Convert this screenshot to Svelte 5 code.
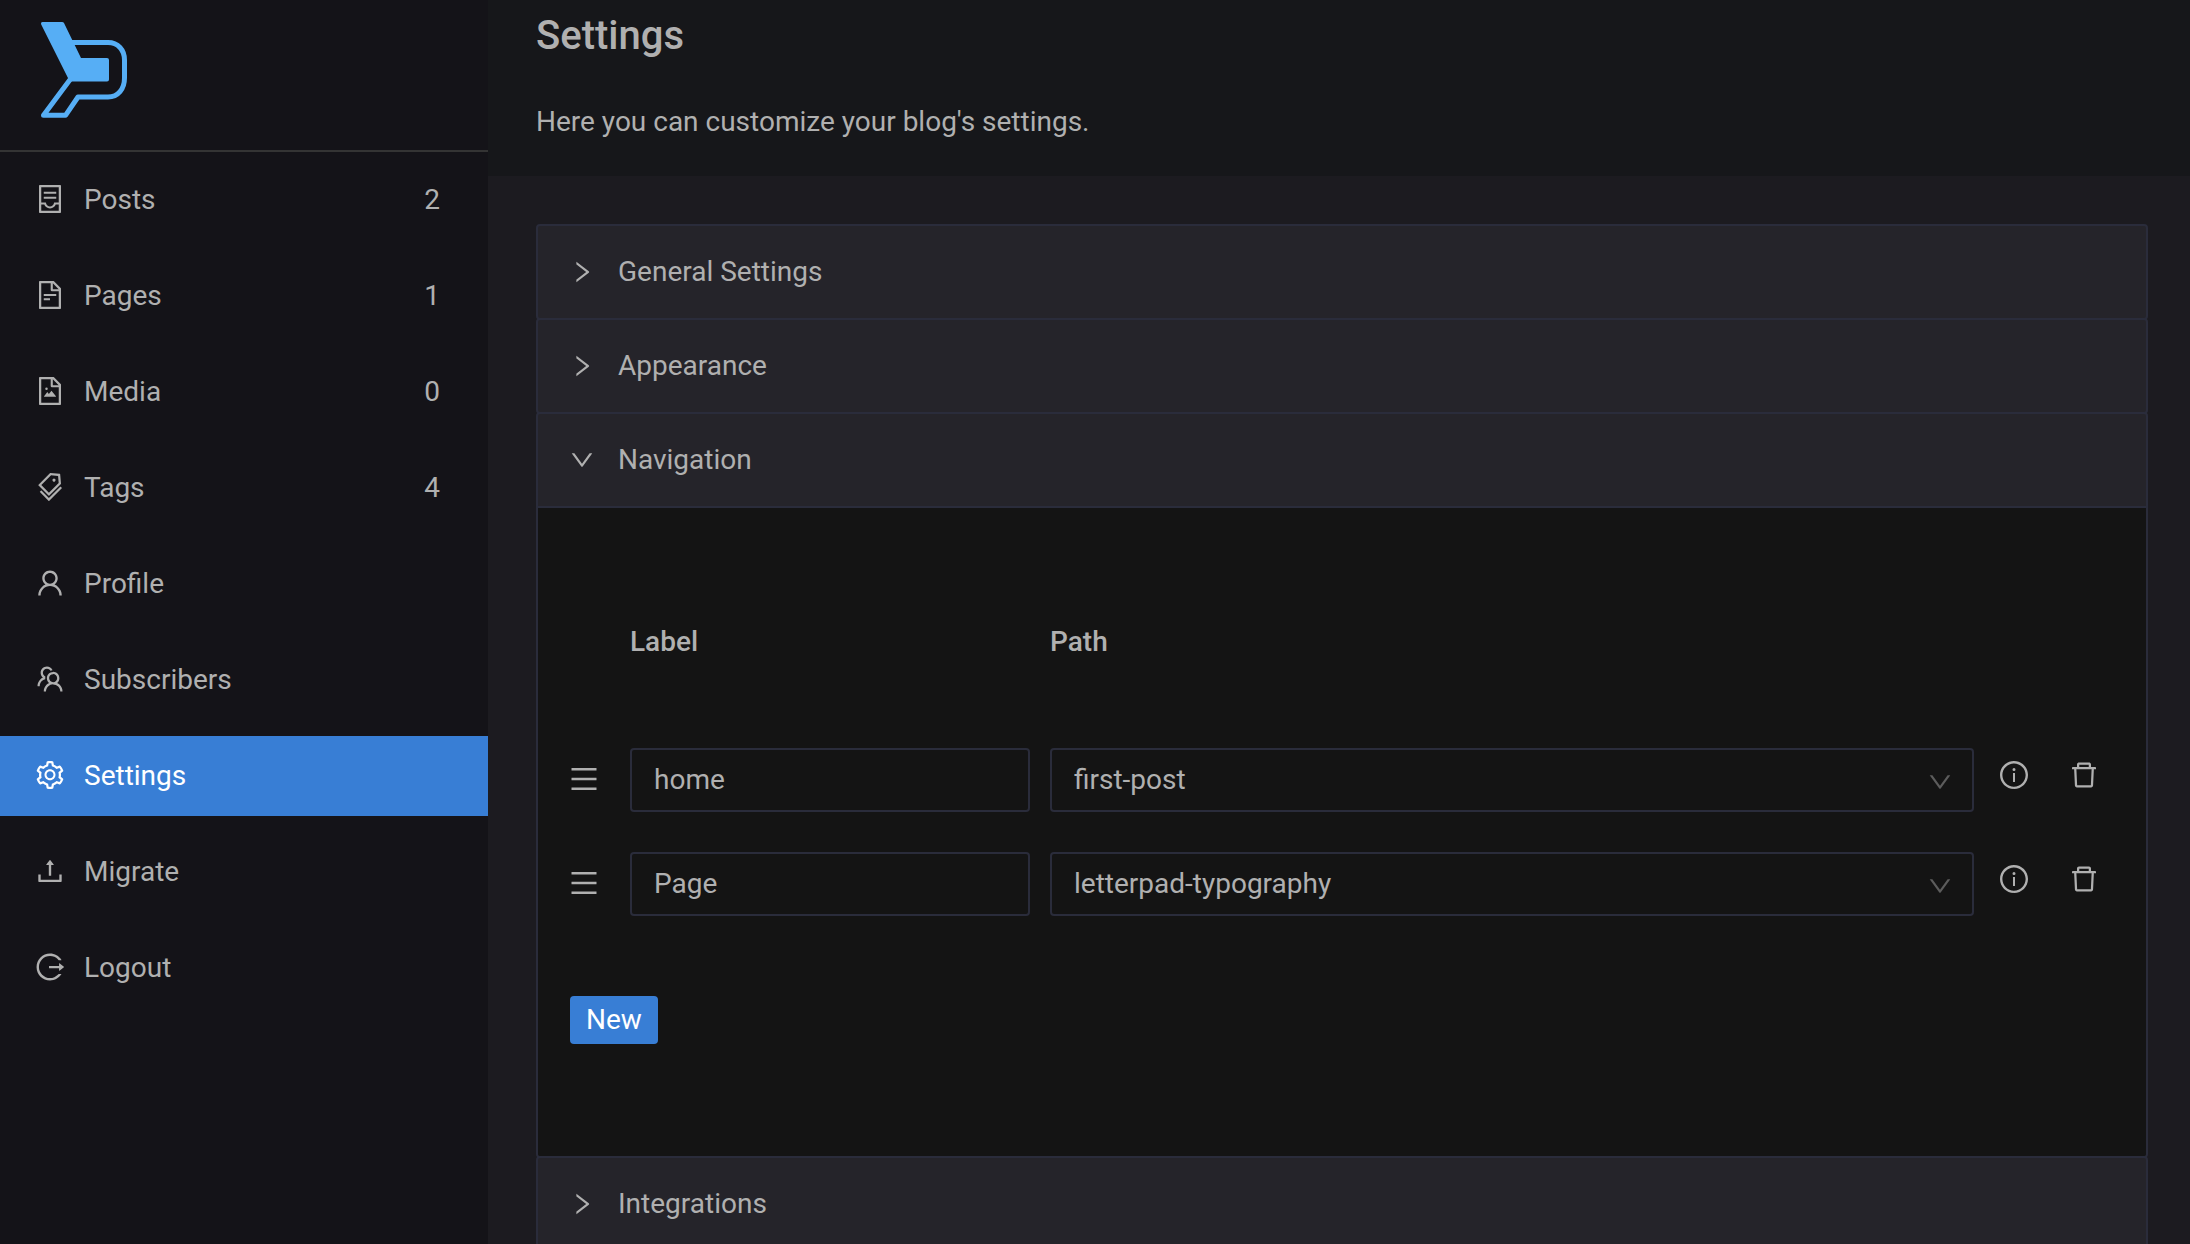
<script>
  const icons = {
    posts: 'M832 64H192c-17.7 0-32 14.3-32 32v832c0 17.7 14.3 32 32 32h640c17.7 0 32-14.3 32-32V96c0-17.7-14.3-32-32-32zm-40 824H232V687h97.9c11.6 32.8 32 62.3 59.1 84.7 34.5 28.5 78.2 44.3 123 44.3s88.5-15.7 123-44.3c27.1-22.4 47.5-51.9 59.1-84.7H792v201zm0-264H643.6l-5.2 24.7C626.4 708.5 573.2 752 512 752s-114.4-43.5-126.5-103.3l-5.2-24.7H232V136h560v488zM320 341h384c4.4 0 8-3.6 8-8v-48c0-4.4-3.6-8-8-8H320c-4.4 0-8 3.6-8 8v48c0 4.4 3.6 8 8 8zm0 160h384c4.4 0 8-3.6 8-8v-48c0-4.4-3.6-8-8-8H320c-4.4 0-8 3.6-8 8v48c0 4.4 3.6 8 8 8z',
    pages: 'M854.6 288.6L639.4 73.4c-6-6-14.1-9.4-22.6-9.4H192c-17.7 0-32 14.3-32 32v832c0 17.7 14.3 32 32 32h640c17.7 0 32-14.3 32-32V311.3c0-8.5-3.4-16.7-9.4-22.7zM790.2 326H602V137.8L790.2 326zm1.8 562H232V136h302v216a42 42 0 0042 42h216v494zM504 618H320c-4.4 0-8 3.6-8 8v48c0 4.4 3.6 8 8 8h184c4.4 0 8-3.6 8-8v-48c0-4.4-3.6-8-8-8zM312 490v48c0 4.4 3.6 8 8 8h384c4.4 0 8-3.6 8-8v-48c0-4.4-3.6-8-8-8H320c-4.4 0-8 3.6-8 8z',
    media: 'M553.1 509.1l-77.8 99.2-41.1-52.4a8 8 0 00-12.6 0l-99.8 127.2a7.98 7.98 0 006.3 12.9H696c6.7 0 10.4-7.7 6.3-12.9l-136.5-174a8.1 8.1 0 00-12.7 0zM360 442a40 40 0 1080 0 40 40 0 10-80 0zm494.6-153.4L639.4 73.4c-6-6-14.1-9.4-22.6-9.4H192c-17.7 0-32 14.3-32 32v832c0 17.7 14.3 32 32 32h640c17.7 0 32-14.3 32-32V311.3c0-8.5-3.4-16.7-9.4-22.7zM790.2 326H602V137.8L790.2 326zm1.8 562H232V136h302v216a42 42 0 0042 42h216v494z',
    tags: 'M483.2 790.3L861.4 412c1.7-1.7 2.5-4 2.3-6.3l-25.5-301.4c-.7-7.8-6.8-13.9-14.6-14.6L522.2 64.3c-2.3-.2-4.7.6-6.3 2.3L137.7 444.8a8.03 8.03 0 000 11.3l334.2 334.2c3.1 3.2 8.2 3.2 11.3 0zm62.6-651.7l224.6 19 19 224.6L477.5 694 233.9 450.5l311.9-311.9zm60.16 186.23a48 48 0 1067.88-67.89 48 48 0 10-67.88 67.89zM889.7 539.8l-39.6-39.5a8.03 8.03 0 00-11.3 0l-362 361.3-237.6-237a8.03 8.03 0 00-11.3 0l-39.6 39.5a8.03 8.03 0 000 11.3l243.2 242.8 39.6 39.5c3.1 3.1 8.2 3.1 11.3 0l407.3-406.6c3.1-3.1 3.1-8.2 0-11.3z',
    profile: 'M858.5 763.6a374 374 0 00-80.6-119.5 375.63 375.63 0 00-119.5-80.6c-.4-.2-.8-.3-1.2-.5C719.5 518 760 444.7 760 362c0-137-111-248-248-248S264 225 264 362c0 82.7 40.5 156 102.8 201.1-.4.2-.8.3-1.2.5-44.8 18.9-85 46-119.5 80.6a375.63 375.63 0 00-80.6 119.5A371.7 371.7 0 00136 901.8a8 8 0 008 8.2h60c4.4 0 7.9-3.5 8-7.8 2-77.2 33-149.5 87.8-204.3 56.7-56.7 132-87.9 212.2-87.9s155.5 31.2 212.2 87.9C779 752.7 810 825 812 902.2c.1 4.4 3.6 7.8 8 7.8h60a8 8 0 008-8.2c-1-47.8-10.9-94.3-29.5-138.2zM512 534c-45.9 0-89.1-17.9-121.6-50.4S340 407.9 340 362c0-45.9 17.9-89.1 50.4-121.6S466.1 190 512 190s89.1 17.9 121.6 50.4S684 316.1 684 362c0 45.9-17.9 89.1-50.4 121.6S557.9 534 512 534z',
    subscribers: 'M824.2 699.9a301.55 301.55 0 00-86.4-60.4C783.1 602.8 812 546.8 812 484c0-110.8-92.4-201.7-203.2-200-109.1 1.7-197 90.6-197 200 0 62.8 29 118.8 74.2 155.5a300.95 300.95 0 00-86.4 60.4C345 754.6 314 826.8 312 903.8a8 8 0 008 8.2h56c4.3 0 7.9-3.4 8-7.7 1.9-58 25.4-112.3 66.7-153.5A226.62 226.62 0 01612 684c60.9 0 118.2 23.7 161.3 66.8C814.6 792 838 846.3 840 904.3c.1 4.3 3.7 7.7 8 7.7h56a8 8 0 008-8.2c-2-77-33-149.2-87.8-203.9zM612 612c-34.2 0-66.4-13.3-90.5-37.5a126.86 126.86 0 01-37.5-91.8c.3-32.8 13.4-64.5 36.3-88 24-24.6 56.1-38.3 90.4-38.7 33.9-.3 66.8 12.9 91 36.6 24.8 24.3 38.4 56.8 38.4 91.4 0 34.2-13.3 66.3-37.5 90.5A127.3 127.3 0 01612 612zM361.5 510.4c-.9-8.7-1.4-17.5-1.4-26.4 0-15.9 1.5-31.4 4.3-46.5.7-3.6-1.2-7.3-4.5-8.8-13.6-6.1-26.1-14.5-36.9-25.1a127.54 127.54 0 01-38.7-95.4c.9-32.1 13.8-62.6 36.3-85.6 24.7-25.3 57.9-39.1 93.2-38.7 31.9.3 62.7 12.6 86 34.4 7.9 7.4 14.7 15.6 20.4 24.4 2 3.1 5.9 4.4 9.3 3.2 17.6-6.1 36.2-10.4 55.3-12.4 5.6-.6 8.8-6.6 6.3-11.6-32.5-64.3-98.9-108.7-175.7-109.9-110.9-1.7-203.3 89.2-203.3 199.9 0 62.8 28.9 118.8 74.2 155.5-31.8 14.7-61.1 35-86.5 60.4-54.8 54.7-85.8 126.9-87.8 204a8 8 0 008 8.2h56.1c4.3 0 7.9-3.4 8-7.7 1.9-58 25.4-112.3 66.7-153.5 29.4-29.4 65.4-49.8 104.7-59.7 3.9-1 6.5-4.7 6-8.7z',
    settings: 'M924.8 625.7l-65.5-56c3.1-19 4.7-38.4 4.7-57.8s-1.6-38.8-4.7-57.8l65.5-56a32.03 32.03 0 009.3-35.2l-.9-2.6a443.74 443.74 0 00-79.7-137.9l-1.8-2.1a32.12 32.12 0 00-35.1-9.5l-81.3 28.9c-30-24.6-63.5-44-99.7-57.6l-15.7-85a32.05 32.05 0 00-25.8-25.7l-2.7-.5c-52.1-9.4-106.9-9.4-159 0l-2.7.5a32.05 32.05 0 00-25.8 25.7l-15.8 85.4a351.86 351.86 0 00-99 57.4l-81.9-29.1a32 32 0 00-35.1 9.5l-1.8 2.1a446.02 446.02 0 00-79.7 137.9l-.9 2.6c-4.5 12.5-.8 26.5 9.3 35.2l66.3 56.6c-3.1 18.8-4.6 38-4.6 57.1 0 19.2 1.5 38.4 4.6 57.1L99 625.5a32.03 32.03 0 00-9.3 35.2l.9 2.6c18.1 50.4 44.9 96.9 79.7 137.9l1.8 2.1a32.12 32.12 0 0035.1 9.5l81.9-29.1c29.8 24.5 63.1 43.9 99 57.4l15.8 85.4a32.05 32.05 0 0025.8 25.7l2.7.5a449.4 449.4 0 00159 0l2.7-.5a32.05 32.05 0 0025.8-25.7l15.7-85a350 350 0 0099.7-57.6l81.3 28.9a32 32 0 0035.1-9.5l1.8-2.1c34.8-41.1 61.6-87.5 79.7-137.9l.9-2.6c4.5-12.3.8-26.3-9.3-35zM788.3 465.9c2.5 15.1 3.8 30.6 3.8 46.1s-1.3 31-3.8 46.1l-6.6 40.1 74.7 63.9a370.03 370.03 0 01-42.6 73.6L721 702.8l-31.4 25.8c-23.9 19.6-50.5 35-79.3 45.8l-38.1 14.3-17.9 97a377.5 377.5 0 01-85 0l-17.9-97.2-37.8-14.5c-28.5-10.8-55-26.2-78.7-45.7l-31.4-25.9-93.4 33.2c-17-22.9-31.2-47.6-42.6-73.6l75.5-64.5-6.5-40c-2.4-14.9-3.7-30.3-3.7-45.5 0-15.3 1.2-30.6 3.7-45.5l6.5-40-75.5-64.5c11.3-26.1 25.6-50.7 42.6-73.6l93.4 33.2 31.4-25.9c23.7-19.5 50.2-34.9 78.7-45.7l37.9-14.3 17.9-97.2c28.1-3.2 56.8-3.2 85 0l17.9 97 38.1 14.3c28.7 10.8 55.4 26.2 79.3 45.8l31.4 25.8 92.8-32.9c17 22.9 31.2 47.6 42.6 73.6L781.8 426l6.5 39.9zM512 326c-97.2 0-176 78.8-176 176s78.8 176 176 176 176-78.8 176-176-78.8-176-176-176zm79.2 255.2A111.6 111.6 0 01512 614c-29.9 0-58-11.7-79.2-32.8A111.6 111.6 0 01400 502c0-29.9 11.7-58 32.8-79.2C454 401.6 482.1 390 512 390c29.9 0 58 11.6 79.2 32.8A111.6 111.6 0 01624 502c0 29.9-11.7 58-32.8 79.2z',
    migrate: 'M400 317.7h73.9V656c0 4.4 3.6 8 8 8h60c4.4 0 8-3.6 8-8V317.7H624c6.7 0 10.4-7.7 6.3-12.9L518.3 163a8 8 0 00-12.6 0l-112 141.7c-4.1 5.3-.4 13 6.3 13zM878 626h-60c-4.4 0-8 3.6-8 8v154H214V634c0-4.4-3.6-8-8-8h-60c-4.4 0-8 3.6-8 8v198c0 17.7 14.3 32 32 32h684c17.7 0 32-14.3 32-32V634c0-4.4-3.6-8-8-8z',
    logout: 'M868 732h-70.3c-4.8 0-9.3 2.1-12.3 5.8-7 8.5-14.5 16.7-22.4 24.5a353.84 353.84 0 01-112.7 75.9A352.8 352.8 0 01512.4 866c-47.9 0-94.3-9.4-137.9-27.8a353.84 353.84 0 01-112.7-75.9 353.28 353.28 0 01-76-112.5C167.3 606.2 158 559.9 158 512s9.4-94.2 27.8-137.8c17.8-42.1 43.4-80 76-112.5s70.5-58.1 112.7-75.9c43.6-18.4 90-27.8 137.9-27.8 47.9 0 94.3 9.3 137.9 27.8 42.2 17.8 80.1 43.4 112.7 75.9 7.9 7.9 15.3 16.1 22.4 24.5 3 3.7 7.6 5.8 12.3 5.8H868c6.3 0 10.2-7 6.7-12.3C798 160.5 663.8 81.6 511.3 82 271.7 82.6 79.6 277.1 82 516.4 84.4 751.9 276.2 942 512.4 942c152.1 0 285.7-78.8 362.3-197.7 3.4-5.3-.4-12.3-6.7-12.3zm88.9-226.3L815 393.7c-5.3-4.2-13-.4-13 6.3v76H488c-4.4 0-8 3.6-8 8v56c0 4.4 3.6 8 8 8h314v76c0 6.7 7.8 10.5 13 6.3l141.9-112a8 8 0 000-12.6z',
    info: 'M512 64C264.6 64 64 264.6 64 512s200.6 448 448 448 448-200.6 448-448S759.4 64 512 64zm0 820c-205.4 0-372-166.6-372-372s166.6-372 372-372 372 166.6 372 372-166.6 372-372 372zM464 336a48 48 0 1096 0 48 48 0 10-96 0zm72 112h-48c-4.4 0-8 3.6-8 8v272c0 4.4 3.6 8 8 8h48c4.4 0 8-3.6 8-8V456c0-4.4-3.6-8-8-8z',
    trash: 'M360 184h-8c4.4 0 8-3.6 8-8v8h304v-8c0 4.4 3.6 8 8 8h-8v72h72v-80c0-35.3-28.7-64-64-64H352c-35.3 0-64 28.7-64 64v80h72v-72zm504 72H160c-17.7 0-32 14.3-32 32v32c0 4.4 3.6 8 8 8h60.4l24.7 523c1.6 34.1 29.8 61 63.9 61h454c34.2 0 62.3-26.8 63.9-61l24.7-523H888c4.4 0 8-3.6 8-8v-32c0-17.7-14.3-32-32-32zM731.3 840H292.7l-24.2-512h487l-24.2 512z',
    menu: 'M904 160H120c-4.4 0-8 3.6-8 8v64c0 4.4 3.6 8 8 8h784c4.4 0 8-3.6 8-8v-64c0-4.4-3.6-8-8-8zm0 624H120c-4.4 0-8 3.6-8 8v64c0 4.4 3.6 8 8 8h784c4.4 0 8-3.6 8-8v-64c0-4.4-3.6-8-8-8zm0-312H120c-4.4 0-8 3.6-8 8v64c0 4.4 3.6 8 8 8h784c4.4 0 8-3.6 8-8v-64c0-4.4-3.6-8-8-8z',
    down: 'M884 256h-75c-5.1 0-9.9 2.5-12.9 6.6L512 654.2 227.9 262.6c-3-4.1-7.8-6.6-12.9-6.6h-75c-6.5 0-10.3 7.4-6.5 12.7l352.6 486.1c12.8 17.6 39 17.6 51.7 0l352.6-486.1c3.9-5.3.1-12.7-6.4-12.7z',
    right: 'M765.7 486.8L314.9 134.7A7.97 7.97 0 00302 141v77.3c0 4.9 2.3 9.6 6.1 12.6l360 281.1-360 281.1c-3.9 3-6.1 7.7-6.1 12.6V883c0 6.7 7.7 10.4 12.9 6.3l450.8-352.1a31.96 31.96 0 000-50.4z',
  };

  const nav = [
    { name: 'Posts', icon: 'posts', count: 2 },
    { name: 'Pages', icon: 'pages', count: 1 },
    { name: 'Media', icon: 'media', count: 0 },
    { name: 'Tags', icon: 'tags', count: 4 },
    { name: 'Profile', icon: 'profile' },
    { name: 'Subscribers', icon: 'subscribers' },
    { name: 'Settings', icon: 'settings' },
    { name: 'Migrate', icon: 'migrate' },
    { name: 'Logout', icon: 'logout' },
  ];

  const sections = ['General Settings', 'Appearance', 'Navigation', 'Integrations'];
  const paths = ['first-post', 'letterpad-typography'];

  let open = $state('Navigation');
  let links = $state([
    { label: 'home', path: 'first-post' },
    { label: 'Page', path: 'letterpad-typography' },
  ]);
</script>

{#snippet icon(name)}
  <svg class="icon" viewBox="64 64 896 896" aria-hidden="true"><path d={icons[name]} /></svg>
{/snippet}

<div class="layout">
  <aside class="sidebar">
    <a class="brand" href="#home" aria-label="Home">
      <svg class="logo" viewBox="40 20 90 100" aria-hidden="true">
        <path class="logo-fill" d="M42.5 22H62q1.5 0 2 1L81 58h26q2 0 2 2v19.5q0 2-2 2H70L68 78 41.2 24.5Q40.5 22 42.5 22z" />
        <path class="logo-line" d="M72 42.5h36C118 42.5 124.5 50 124.5 60v18C124.500 89 118 97 108 97H78L65.5 115.3H43.5L70.5 79" />
      </svg>
    </a>
    <nav class="menu">
      {#each nav as item}
        <a class="menu-item" class:active={item.name === 'Settings'} href="#{item.icon}">
          {@render icon(item.icon)}
          <span class="menu-name">{item.name}</span>
          {#if item.count !== undefined}<span>{item.count}</span>{/if}
        </a>
      {/each}
    </nav>
  </aside>

  <main class="main">
    <header class="header">
      <h1>Settings</h1>
      <p>Here you can customize your blog's settings.</p>
    </header>

    <div class="sections">
      {#each sections as section}
        <section class="section">
          <h2>
            <button
              class="section-toggle"
              type="button"
              aria-expanded={open === section}
              onclick={() => (open = open === section ? '' : section)}
            >
              {@render icon(open === section ? 'down' : 'right')}
              {section}
            </button>
          </h2>
          {#if section === 'Navigation' && open === section}
            <div class="section-body">
              <div class="grid titles">
                <span class="title-label" id="col-label">Label</span>
                <span class="title-path" id="col-path">Path</span>
              </div>
              <div class="links">
                {#each links as link, i}
                  <div class="grid">
                    <span class="handle">{@render icon('menu')}</span>
                    <input class="field" type="text" aria-labelledby="col-label" bind:value={link.label} />
                    <div class="select">
                      <select class="field" aria-labelledby="col-path" bind:value={link.path}>
                        {#each paths as path}<option value={path}>{path}</option>{/each}
                      </select>
                      <span class="select-arrow">{@render icon('down')}</span>
                    </div>
                    <div class="actions">
                      <button class="icon-button" type="button" aria-label="Info">{@render icon('info')}</button>
                      <button
                        class="icon-button"
                        type="button"
                        aria-label="Delete"
                        onclick={() => links.splice(i, 1)}>{@render icon('trash')}</button
                      >
                    </div>
                  </div>
                {/each}
              </div>
              <button
                class="new"
                type="button"
                onclick={() => links.push({ label: '', path: paths[0] })}>New</button
              >
            </div>
          {/if}
        </section>
      {/each}
    </div>
  </main>
</div>

<style>
  :global(body) {
    background: #1c1b20;
  }

  .layout {
    --text: #b0b0b0;
    --line: #2a2c3b;
    --blue: #387ed5;
    display: flex;
    height: 100vh;
    overflow: hidden;
    color: var(--text);
    font: 400 28px/44px Roboto, 'Liberation Sans', sans-serif;
  }

  .layout * {
    box-sizing: border-box;
  }

  button,
  input,
  select {
    margin: 0;
    border: 0;
    background: none;
    color: inherit;
    font: inherit;
  }

  button {
    padding: 0;
    cursor: pointer;
  }

  .icon {
    display: block;
    flex: none;
    width: 28px;
    height: 28px;
    fill: currentColor;
  }

  /* Sidebar */
  .sidebar {
    flex: none;
    width: 488px;
    background: #141318;
  }

  .brand {
    display: block;
    padding: 20px 40px 30px;
    border-bottom: 2px solid #343434;
  }

  .logo {
    display: block;
    width: 90px;
    height: 100px;
  }

  .logo-fill {
    fill: #56aef5;
  }

  .logo-line {
    fill: none;
    stroke: #56aef5;
    stroke-width: 5;
    stroke-linejoin: round;
  }

  .menu {
    display: flex;
    flex-direction: column;
    gap: 16px;
    padding: 8px 0;
  }

  .menu-item {
    display: flex;
    align-items: center;
    gap: 20px;
    height: 80px;
    padding: 0 48px 0 36px;
    color: inherit;
    text-decoration: none;
  }

  .menu-item .icon,
  .handle {
    margin-bottom: 2px;
  }

  .menu-item.active {
    background: var(--blue);
    color: #fff;
  }

  .menu-name {
    flex: 1;
  }

  /* Main column */
  .main {
    flex: 1;
    min-width: 0;
    overflow-y: auto;
    scrollbar-width: none;
    background: #1c1b20;
  }

  .header {
    padding: 8px 48px 32px;
    background: #16171a;
  }

  h1 {
    margin: 0 0 36px;
    font-size: 40px;
    font-weight: 500;
    line-height: 56px;
  }

  p {
    margin: 0;
  }

  .sections {
    padding: 48px 42px 48px 48px;
  }

  .section {
    overflow: hidden;
    border: 2px solid var(--line);
    border-radius: 4px;
    background: #25242a;
  }

  .section + .section {
    margin-top: -2px;
  }

  h2 {
    margin: 0;
    font: inherit;
  }

  .section-toggle {
    display: flex;
    align-items: center;
    gap: 24px;
    width: 100%;
    height: 92px;
    padding: 0 32px;
    text-align: left;
  }

  .section-toggle .icon,
  .select-arrow .icon {
    width: 24px;
    height: 24px;
  }

  .section-body {
    padding: 112px 32px;
    border-top: 2px solid var(--line);
    background: #141414;
  }

  .grid {
    display: grid;
    grid-template-columns: 60px minmax(0, 100fr) 20px minmax(0, 231fr) 140px;
  }

  .titles {
    margin-bottom: 84px;
    font-weight: 500;
  }

  .title-label {
    grid-column: 2;
  }

  .title-path {
    grid-column: 4;
  }

  .links {
    display: flex;
    flex-direction: column;
    gap: 40px;
  }

  .handle {
    align-self: center;
  }

  .field {
    width: 100%;
    height: 64px;
    padding: 0 22px;
    border: 2px solid var(--line);
    border-radius: 4px;
  }

  input.field {
    padding-bottom: 2px;
  }

  .select {
    position: relative;
    grid-column: 4;
  }

  select.field {
    appearance: none;
  }

  .select-arrow {
    position: absolute;
    top: 22px;
    right: 22px;
    color: #5c5c5c;
    pointer-events: none;
  }

  .actions {
    display: flex;
    align-items: center;
    gap: 42px;
    height: 54px;
    padding-left: 26px;
  }

  .new {
    display: block;
    height: 48px;
    margin-top: 80px;
    padding: 0 16px;
    border-radius: 4px;
    background: var(--blue);
    color: #fff;
  }
</style>
